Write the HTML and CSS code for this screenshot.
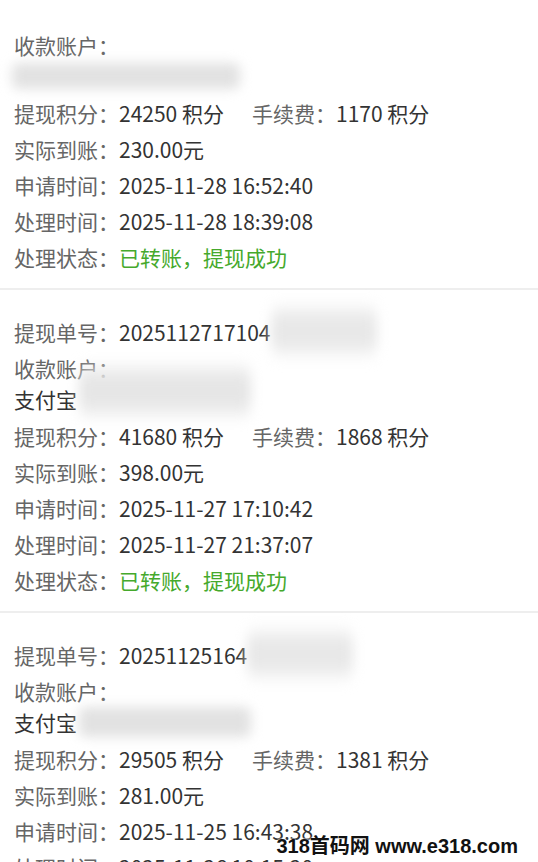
FILE: index.html
```html
<!DOCTYPE html>
<html lang="zh-CN">
<head>
	<meta charset="UTF-8">
	<title>提现记录</title>
	<link rel="stylesheet" href="styles.css">
</head>
<body>
	<div class="list">
		<div class="item first">
			<div class="account">
				<p>收款账户：</p>
				<p><span class="mask mask-wide"></span></p>
			</div>
			<p class="row"><span class="label">提现积分：</span><span class="val">24250 积分</span><span class="fee"><span class="label">手续费：</span><span class="val">1170 积分</span></span></p>
			<p class="row"><span class="label">实际到账：</span><span class="val">230.00元</span></p>
			<p class="row"><span class="label">申请时间：</span><span class="val">2025-11-28 16:52:40</span></p>
			<p class="row"><span class="label">处理时间：</span><span class="val">2025-11-28 18:39:08</span></p>
			<p class="row"><span class="label">处理状态：</span><span class="val ok">已转账，提现成功</span></p>
		</div>
		<div class="item">
			<p class="row"><span class="label">提现单号：</span><span class="val">2025112717104</span><span class="mask mask-no"></span></p>
			<div class="account">
				<p>收款账户：</p>
				<p><span class="val">支付宝</span><span class="mask mask-ali mask-up"></span></p>
			</div>
			<p class="row"><span class="label">提现积分：</span><span class="val">41680 积分</span><span class="fee"><span class="label">手续费：</span><span class="val">1868 积分</span></span></p>
			<p class="row"><span class="label">实际到账：</span><span class="val">398.00元</span></p>
			<p class="row"><span class="label">申请时间：</span><span class="val">2025-11-27 17:10:42</span></p>
			<p class="row"><span class="label">处理时间：</span><span class="val">2025-11-27 21:37:07</span></p>
			<p class="row"><span class="label">处理状态：</span><span class="val ok">已转账，提现成功</span></p>
		</div>
		<div class="item">
			<p class="row"><span class="label">提现单号：</span><span class="val">20251125164</span><span class="mask mask-no"></span></p>
			<div class="account">
				<p>收款账户：</p>
				<p><span class="val">支付宝</span><span class="mask mask-ali"></span></p>
			</div>
			<p class="row"><span class="label">提现积分：</span><span class="val">29505 积分</span><span class="fee"><span class="label">手续费：</span><span class="val">1381 积分</span></span></p>
			<p class="row"><span class="label">实际到账：</span><span class="val">281.00元</span></p>
			<p class="row"><span class="label">申请时间：</span><span class="val">2025-11-25 16:43:38</span></p>
			<p class="row"><span class="label">处理时间：</span><span class="val">2025-11-26 10:15:20</span></p>
		</div>
	</div>
	<div class="watermark">318首码网 www.e318.com</div>
</body>
</html>
```

FILE: styles.css
```css
*{
	margin: 0;
	padding: 0;
}
html,body{
	height: 100%;
	overflow: hidden;
	background: #fff;
}
body{
	position: relative;
	padding-top: 3px;
	font-family: "Noto Sans CJK SC", "Noto Sans", sans-serif;
	font-size: 21px;
	color: #666;
}
.item{
	padding: 24px 14px 13px;
	border-bottom: 2px solid #eeeeee;
}
.row{
	height: 36px;
	line-height: 36px;
	white-space: nowrap;
}
.label{
	color: #666;
}
.val{
	color: #333;
}
.account{
	padding: 3px 0 3px;
	line-height: 31px;
	white-space: nowrap;
}
.account p{
	height: 31px;
}
.fee{
	margin-left: 28px;
}
.ok{
	color: #45a92c;
}
.mask{
	display: inline-block;
	vertical-align: top;
	height: 30px;
	background: #e2e2e2;
	border-radius: 6px;
	filter: blur(6px);
}
.mask-wide{
	width: 228px;
	height: 26px;
	margin-top: 2px;
	margin-left: -2px;
}
.mask-ali{
	width: 172px;
	margin-left: 2px;
}
.mask-up{
	background: #e6e6e6;
	transform: translateY(-8px) scaleY(1.45);
}
.mask-no{
	width: 106px;
	background: #e8e8e8;
	transform: translateY(2px) scaleY(1.4);
}
.watermark{
	position: absolute;
	right: 20px;
	bottom: 4px;
	font-family: "Liberation Sans", "Noto Sans CJK SC", sans-serif;
	font-size: 20px;
	font-weight: 700;
	line-height: 30px;
	color: #111;
	text-shadow: 0 0 2px #fff, 0 0 2px #fff;
}
```
